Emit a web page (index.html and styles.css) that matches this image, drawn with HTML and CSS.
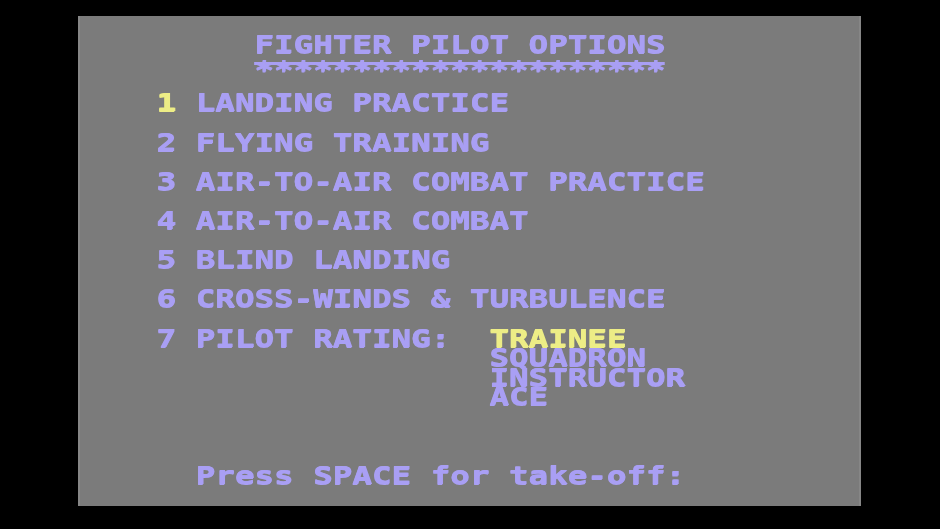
FILE: index.html
```html
<!DOCTYPE html>
<html lang="en">
<head>
<meta charset="utf-8">
<title>Fighter Pilot Options</title>
<link rel="stylesheet" href="styles.css">
</head>
<body>
<main class="screen">
  <div class="text">
    <div class="line"></div>
    <div class="line">         FIGHTER PILOT OPTIONS</div>
    <div class="line">         <span class="stars">*********************</span></div>
    <div class="line"></div>
    <div class="line">    <span class="hi">1</span> LANDING PRACTICE</div>
    <div class="line"></div>
    <div class="line">    2 FLYING TRAINING</div>
    <div class="line"></div>
    <div class="line">    3 AIR-TO-AIR COMBAT PRACTICE</div>
    <div class="line"></div>
    <div class="line">    4 AIR-TO-AIR COMBAT</div>
    <div class="line"></div>
    <div class="line">    5 BLIND LANDING</div>
    <div class="line"></div>
    <div class="line">    6 CROSS-WINDS &amp; TURBULENCE</div>
    <div class="line"></div>
    <div class="line">    7 PILOT RATING:  <span class="hi">TRAINEE</span></div>
    <div class="line">                     SQUADRON</div>
    <div class="line">                     INSTRUCTOR</div>
    <div class="line">                     ACE</div>
    <div class="line"></div>
    <div class="line"></div>
    <div class="line"></div>
    <div class="line">      Press SPACE for take-off:</div>
    <div class="line"></div>
  </div>
</main>
</body>
</html>
```
FILE: styles.css
```css
html, body {
  margin: 0;
  padding: 0;
  background: #000;
}

body {
  width: 940px;
  height: 529px;
  overflow: hidden;
  padding: 16px 0 0 78px;
  box-sizing: border-box;
}

/* 40 x 25 character screen, one cell = 19.58 x 19.6 px */
.screen {
  width: 783px;
  height: 490px;
  background: #7b7b7b;
  box-shadow: inset 2px 0 0 #868686, inset -2px 0 0 #868686;
  overflow: hidden;
}

.text {
  font-family: "DejaVu Sans Mono", "Liberation Mono", monospace;
  font-weight: bold;
  font-size: 24px;
  color: #a99ff4;
  transform: scaleX(1.355);
  transform-origin: 0 0;
  text-shadow: 0 1px 0 currentColor, 0.6px 0 0 currentColor;
  filter: blur(0.45px);
}

.line {
  height: 19.6px;
  line-height: 19.6px;
  white-space: pre;
}

.hi {
  color: #eded86;
}

/* underline row of asterisks joined by a centre bar */
.stars {
  display: inline-block;
  height: 19.6px;
  line-height: 30px;
  vertical-align: top;
  background: linear-gradient(to bottom,
    transparent 7.4px, #a99ff4 7.4px, #a99ff4 9.8px, transparent 9.8px);
}
```
